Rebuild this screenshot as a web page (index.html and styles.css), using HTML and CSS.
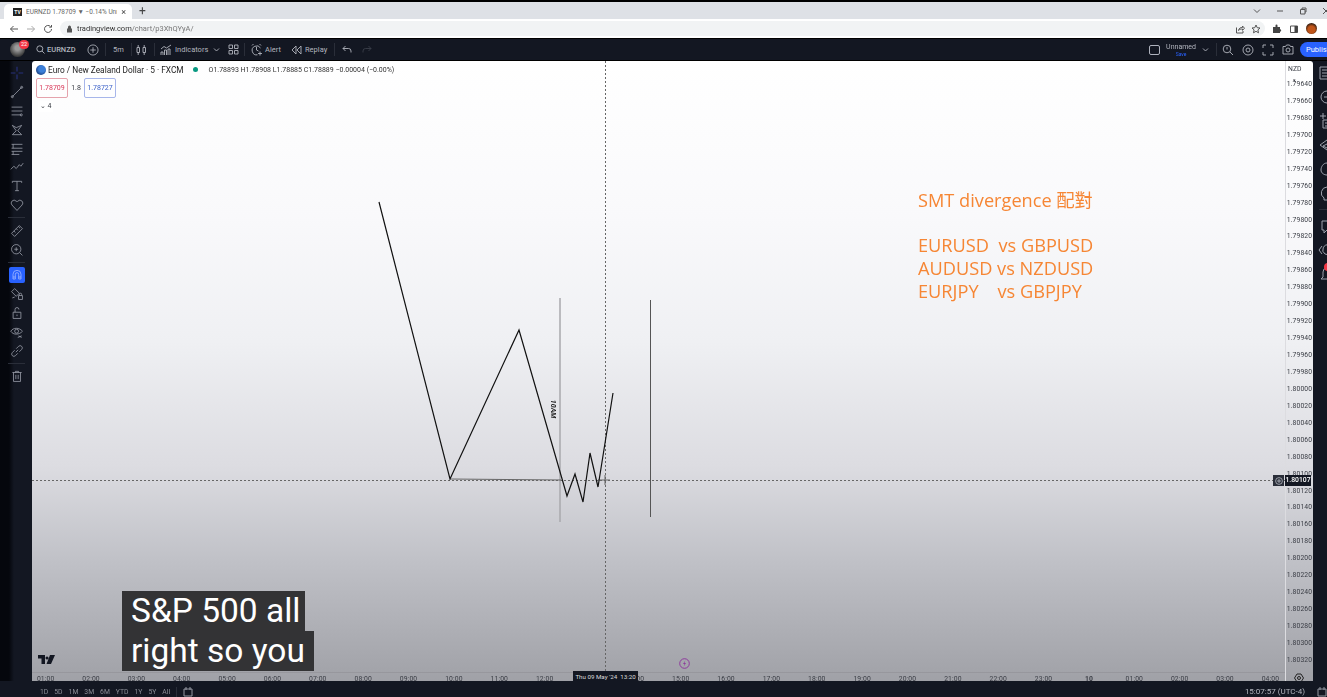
FILE: index.html

```html
<!DOCTYPE html>
<html lang="zh-Hant">
<head>
  <meta charset="UTF-8" />
  <meta name="viewport" content="width=device-width, initial-scale=1.0" />
  <title>EURNZD 1.78709 - TradingView</title>
  <link rel="stylesheet" href="styles.css">
</head>
<body>
  <div class="screen">
    <div class="tabstrip">
      <div class="tab">
        <span class="favicon">TV</span>
        <span class="tab-title">EURNZD 1.78709 ▼ −0.14% Unn</span>
        <span class="tab-close">×</span>
      </div>
      <span class="tab-new">+</span>
      <span class="win-btns">
        <svg width="8" height="8" viewBox="0 0 8 8"><path d="M1 2.500l3 3 3-3" class="ln"/></svg>
        <svg width="8" height="8" viewBox="0 0 8 8"><path d="M1 4h6" class="ln"/></svg>
        <svg width="8" height="8" viewBox="0 0 8 8"><path d="M1.500 2.500h4.500v4.500h-4.500zM3 2.500V1h4v4h-1" class="ln"/></svg>
        <svg width="8" height="8" viewBox="0 0 8 8"><path d="M1 1l6 6M7 1l-6 6" class="ln"/></svg>
      </span>
    </div>

    <div class="addressbar">
      <svg width="10" height="10" viewBox="0 0 10 10"><path d="M9 5H1.500M4.500 2L1.500 5l3 3" class="ln"/></svg>
      <svg class="dim" width="10" height="10" viewBox="0 0 10 10"><path d="M1 5h7.500M5.500 2l3 3-3 3" class="ln"/></svg>
      <svg width="10" height="10" viewBox="0 0 10 10"><path d="M8.500 5a3.500 3.500 0 1 1-1-2.500M8.500 1v2.200H6.300" class="ln"/></svg>
      <div class="omnibox">
        <svg width="7" height="8" viewBox="0 0 7 8"><path d="M1 3.500h5v4H1zM2 3.500V2a1.500 1.500 0 0 1 3 0v1.500" fill="#555"/></svg>
        <span>tradingview.com<span class="url-path">/chart/p3XhQYyA/</span></span>
        <span class="omni-right">
          <svg width="10" height="10" viewBox="0 0 10 10"><path d="M1.500 3.500v5.500h6.500v-2M3.500 6.500c.5-2.500 2-3 4-3V2l2 2.200-2 2.200V5c-1.500 0-3 .3-4 1.500z" class="ln"/></svg>
          <svg width="10" height="10" viewBox="0 0 10 10"><path d="M5 1l1.200 2.700 2.800.3-2.100 1.900.6 2.900L5 7.300 2.500 8.800l.6-2.900L1 4l2.800-.3z" class="ln"/></svg>
        </span>
      </div>
      <svg width="10" height="10" viewBox="0 0 10 10"><path d="M1 3h2.500V1.500a1 1 0 0 1 2 0V3H8v2.200a1.200 1.200 0 0 1 0 2.400V9H1z" fill="#444"/></svg>
      <svg width="10" height="10" viewBox="0 0 10 10"><path d="M1.500 2h7v6.500h-7z" class="ln"/><path d="M5.500 2h3v6.500h-3z" fill="#444"/></svg>
      <span class="profile"></span>
    </div>

    <div class="topbar">
      <span class="slot avatar-slot"><span class="avatar"></span><span class="badge">22</span></span>
      <span class="slot symbol">
        <svg width="9" height="9" viewBox="0 0 9 9"><circle cx="3.800" cy="3.800" r="3" class="tl"/><path d="M6 6l2.500 2.500" class="tl"/></svg>
        EURNZD
      </span>
      <span class="slot plus-slot"><svg width="12" height="12" viewBox="0 0 13 13"><circle cx="6.500" cy="6.500" r="5.500" class="tl"/><path d="M6.500 3.500v6M3.500 6.500h6" class="tl"/></svg></span>
      <span class="sep"></span>
      <span class="slot interval">5m</span>
      <span class="sep"></span>
      <span class="slot candle-slot"><svg width="12" height="12" viewBox="0 0 12 12"><path d="M2 3.500h2.500v5H2zM3.200 1v2.500M3.200 8.500V11M8 3.500h2.500v5H8zM9.200 1v2.500M9.200 8.500V11" class="tl"/></svg></span>
      <span class="sep"></span>
      <span class="slot indicators">
        <svg width="12" height="12" viewBox="0 0 12 12"><path d="M1 5l3-2.500 2.500 1.500L11 1M1 11V8h2v3M4.500 11V6h2v5M8 11V5h2v6" class="tl"/></svg>
        Indicators
      </span>
      <svg class="chev" width="7" height="7" viewBox="0 0 7 7"><path d="M1 2.500l2.500 2.500L6 2.500" class="tl"/></svg>
      <span class="slot layout-slot"><svg width="11" height="11" viewBox="0 0 11 11"><path d="M1 1h3.500v3.500H1zM6.500 1H10v3.500H6.500zM1 6.500h3.500V10H1zM6.500 6.500H10V10H6.500z" class="tl"/></svg></span>
      <span class="sep"></span>
      <span class="slot alert">
        <svg width="12" height="12" viewBox="0 0 12 12"><path d="M9.500 4a4.500 4.500 0 1 0-3 6.800M5.500 3v3l2 1M1 1.500L2.500 0M10 1.500L8.500 0M9 7.500v4M7 9.500h4" class="tl"/></svg>
        Alert
      </span>
      <span class="slot replay">
        <svg width="11" height="10" viewBox="0 0 11 10"><path d="M5 1L1 5l4 4zM10 1L6 5l4 4z" class="tl"/></svg>
        Replay
      </span>
      <span class="sep"></span>
      <span class="slot undo"><svg width="10" height="9" viewBox="0 0 10 9"><path d="M3.500 1L1 3.500 3.500 6M1 3.500h5.500A2.500 2.500 0 0 1 9 6v1.500" class="tl"/></svg></span>
      <span class="slot redo"><svg width="10" height="9" viewBox="0 0 10 9"><path d="M6.500 1L9 3.500 6.500 6M9 3.500H3.500A2.500 2.500 0 0 0 1 6v1.500" class="tl off"/></svg></span>

      <span class="top-right">
        <span class="layout-box"></span>
        <span class="layout-name"><span>Unnamed</span><span class="save">Save</span></span>
        <svg class="chev" width="7" height="7" viewBox="0 0 7 7"><path d="M1 2.500l2.500 2.500L6 2.500" class="tl"/></svg>
        <span class="sep"></span>
        <svg width="12" height="12" viewBox="0 0 12 12"><circle cx="5" cy="5" r="3.800" class="tl"/><path d="M8 8l3 3M5 3v2.500" class="tl"/></svg>
        <svg width="12" height="12" viewBox="0 0 12 12"><circle cx="6" cy="6" r="5" class="tl"/><circle cx="6" cy="6" r="2" class="tl"/></svg>
        <svg width="12" height="12" viewBox="0 0 12 12"><path d="M1 4V1h3M8 1h3v3M11 8v3H8M4 11H1V8" class="tl"/></svg>
        <svg width="12" height="11" viewBox="0 0 12 11"><path d="M1 2.500h2.500L4.500 1h3l1 1.500H11V10H1z" class="tl"/><circle cx="6" cy="6" r="2" class="tl"/></svg>
        <span class="publish">Publish</span>
      </span>
    </div>

    <div class="workspace">
      <div class="lefttools">
        <span class="tool"><svg class="ic active-cross" viewBox="0 0 18 18"><path d="M9 1v6M9 11v6M1 9h6M11 9h6"/></svg></span>
        <span class="tool"><svg class="ic" viewBox="0 0 18 18"><path d="M3 15L15 3"/><circle cx="15" cy="3" r="1.300"/><circle cx="3" cy="15" r="1.300"/></svg></span>
        <span class="tool"><svg class="ic" viewBox="0 0 18 18"><path d="M2 4h14M2 9h14M2 14h12"/><circle cx="14.500" cy="14" r="1.300"/></svg></span>
        <span class="tool"><svg class="ic" viewBox="0 0 18 18"><path d="M3 3l5 7-5 5M15 3l-5 7 5 5M3 3l5 3 7-3M3 15h12"/></svg></span>
        <span class="tool"><svg class="ic" viewBox="0 0 18 18"><path d="M2 3h14M4 3v5M2 8h14M2 12h14M4 12v4M2 16h10"/></svg></span>
        <span class="tool"><svg class="ic" viewBox="0 0 18 18"><path d="M1 12l4-4 3 3 4-5 2 2 3-4"/></svg></span>
        <span class="tool"><svg class="ic" viewBox="0 0 18 18"><path d="M3 5V3h12v2M9 3v12M6.500 15h5"/></svg></span>
        <span class="tool"><svg class="ic" viewBox="0 0 18 18"><path d="M9 16L2.500 9a3.800 3.800 0 0 1 0-5 3.900 3.900 0 0 1 5.500 0L9 5l1-1a3.900 3.900 0 0 1 5.500 0 3.800 3.800 0 0 1 0 5z"/></svg></span>
        <span class="divider"></span>
        <span class="tool"><svg class="ic" viewBox="0 0 18 18"><path d="M2 12L12 2l4 4L6 16zM5 9l2 2M8 6l2 2M11 3.500l2 2"/></svg></span>
        <span class="tool"><svg class="ic" viewBox="0 0 18 18"><circle cx="8" cy="8" r="6"/><path d="M12.500 12.500L16 16M8 5.500v5M5.500 8h5"/></svg></span>
        <span class="divider"></span>
        <span class="tool"><span class="magnet"><svg class="ic" viewBox="0 0 18 18"><path d="M3 15V8a6 6 0 0 1 12 0v7h-3.500V8a2.500 2.500 0 0 0-5 0v7zM3 12h3.500M11.500 12H15"/></svg></span></span>
        <span class="tool"><svg class="ic" viewBox="0 0 18 18"><path d="M2 6l4-4 6 6-4 4zM3 14l3-1M11 11h5v5h-5zM12 11V9.500a1.500 1.500 0 0 1 3 0V11"/></svg></span>
        <span class="tool"><svg class="ic" viewBox="0 0 18 18"><path d="M4 8h10v8H4zM6.500 8V4.500a2.500 2.500 0 0 1 5 0M9 11v2"/></svg></span>
        <span class="tool"><svg class="ic" viewBox="0 0 18 18"><path d="M1 8c3-5 11-5 15 0-4 5-12 5-15 0zM10 16l5-2M11 14l4 2"/><circle cx="8.500" cy="8" r="2.500"/></svg></span>
        <span class="tool"><svg class="ic" viewBox="0 0 18 18"><path d="M7.500 10.500l3-3M6 8l-3 3a2.800 2.800 0 0 0 4 4l3-3M12 10l3-3a2.800 2.800 0 0 0-4-4L8 6"/></svg></span>
        <span class="divider"></span>
        <span class="tool"><svg class="ic" viewBox="0 0 18 18"><path d="M3 4.500h12M7 4.500V3h4v1.500M4.500 4.500V16h9V4.500M7.500 7.500V13M10.500 7.500V13"/></svg></span>
      </div>

      <div class="chart">
        <div class="pane">
          <div class="legend">
            <div class="legend-row">
              <span class="flag"></span>
              <span class="legend-title">Euro / New Zealand Dollar · 5 · FXCM</span>
              <span class="live-dot"></span>
              <span class="ohlc">O1.78893 H1.78908 L1.78885 C1.78889 −0.00004 (−0.00%)</span>
            </div>
            <div class="trade-row">
              <span class="trade sell">1.78709</span>
              <span class="spread">1.8</span>
              <span class="trade buy">1.78727</span>
            </div>
            <span class="collapse">⌄ 4</span>
          </div>

          <svg class="drawing" viewBox="0 0 1253 611">
            <path d="M573.500 0V611" class="cross-line"/>
            <path d="M0 419.500H1253" class="cross-line"/>
            <path d="M528 237V461" class="grey-bar"/>
            <path d="M618.500 239V456" class="thin-bar"/>
            <path d="M418 418L529 419" class="flat"/>
            <path d="M566 419H578M573 414V424" class="flat"/>
            <path d="M347 141L418 418L487 269L535 435L543 413L551 441L558 392L566 426L581 332" class="wave"/>
          </svg>
          <span class="tag-10am">10AM</span>

          <div class="note">
            <p>SMT divergence 配對</p>
            <p class="note-gap">EURUSD&nbsp; vs GBPUSD</p>
            <p>AUDUSD vs NZDUSD</p>
            <p>EURJPY &nbsp;&nbsp; vs GBPJPY</p>
          </div>

          <span class="tv-logo">
            <svg width="17" height="9" viewBox="0 0 17 9"><path d="M0 0h7v9H3.500V3.500H0zM7.500 3a1.500 1.500 0 1 0 0-.1zM12 0h5l-4 9H8.500z" fill="#131722"/></svg>
          </span>
          <span class="bolt"><svg width="11" height="11" viewBox="0 0 11 11"><circle cx="5.500" cy="5.500" r="4.800" fill="none" stroke="#8e3a9d"/><path d="M6.300 2.500L4 6h1.500l-.8 2.500L7 5H5.500z" fill="#8e3a9d"/></svg></span>
        </div>

        <div class="price-axis" id="prices">
          <span class="currency">NZD <i>▾</i></span>
        </div>

        <div class="time-axis" id="times"></div>
        <div class="axis-corner"><svg width="10" height="10" viewBox="0 0 10 10"><path d="M3 1h4l2.500 4L7 9H3L.5 5z" fill="none" stroke="#222"/><circle cx="5" cy="5" r="1.500" fill="none" stroke="#222"/></svg></div>

        <div class="price-tag">
          <span class="tag-plus"><svg width="8" height="8" viewBox="0 0 8 8"><circle cx="4" cy="4" r="3.400" fill="none" stroke="#c9ccd4" stroke-width="0.7"/><path d="M4 2v4M2 4h4" stroke="#c9ccd4" stroke-width="0.7"/></svg></span>
          <span class="tag-value">1.80107</span>
        </div>
        <span class="date-tag">Thu 09 May '24 &nbsp;13:20</span>
      </div>

      <div class="righttools">
        <svg class="ric" viewBox="0 0 14 14"><path d="M1 1h12v12H1zM3 4h8M3 7h8M3 10h8"/></svg>
        <svg class="ric" viewBox="0 0 14 14"><circle cx="8" cy="7" r="6"/><path d="M8 7H5"/></svg>
        <svg class="ric" viewBox="0 0 14 14"><path d="M1 2h6M4-1v6M4 6h9v8H4zM6 9h7M6 12h7"/></svg>
        <svg class="ric" viewBox="0 0 14 14"><path d="M8 2L1 7l7 5M8 6L4 8l4 2"/></svg>
        <svg class="ric" viewBox="0 0 14 14"><path d="M8 1C4 1 2 5 2 8s3 5 6 5"/></svg>
        <svg class="ric" viewBox="0 0 14 14"><path d="M8 1a6 6 0 0 0-3 11v2h5"/></svg>
        <span class="rdiv"></span>
        <svg class="ric" viewBox="0 0 14 14"><path d="M14 2H3v9h2v3l3-3h6"/></svg>
        <svg class="ric" viewBox="0 0 14 14"><path d="M3 3L0 7l3 4M10 2a5 5 0 0 0-4 9l4 1"/></svg>
        <svg class="ric" viewBox="0 0 14 14"><path d="M8 1a4 4 0 0 0-4 4v5l-2 2h12"/><circle cx="9" cy="0" r="4" fill="#f23645" stroke="none"/></svg>
      </div>
    </div>

    <div class="bottombar">
      <span class="ranges">
        <span>1D</span><span>5D</span><span>1M</span><span>3M</span><span>6M</span><span>YTD</span><span>1Y</span><span>5Y</span><span>All</span>
      </span>
      <span class="sep"></span>
      <svg width="10" height="10" viewBox="0 0 10 10"><path d="M1 2h8v7H1zM3 0v3M7 0v3" fill="none" stroke="#9598a1"/></svg>
      <span class="clock">15:07:57 (UTC-4)</span>
      <svg width="10" height="10" viewBox="0 0 10 10"><path d="M1 2h8v7H1zM3 0v3M7 0v3" fill="none" stroke="#9598a1"/></svg>
    </div>

    <div class="captions">
      <span class="cap-line">S&amp;P 500 all</span>
      <span class="cap-line cap-wide">right so you</span>
    </div>
  </div>

  <script>
    const prices = document.getElementById('prices');
    for (let i = 0; i < 35; i++) {
      const label = document.createElement('span');
      label.textContent = (1.7964 + i * 0.0002).toFixed(5);
      prices.appendChild(label);
    }

    // 13:00 sits under the crosshair date tag, so it is left empty
    const times = document.getElementById('times');
    const labels = ['01:00','02:00','03:00','04:00','05:00','06:00','07:00','08:00','09:00','10:00','11:00','12:00','','14:00','15:00','16:00','17:00','18:00','19:00','20:00','21:00','22:00','23:00','10','01:00','02:00','03:00','04:00'];
    labels.forEach((t) => {
      const label = document.createElement('span');
      label.textContent = t;
      if (t === '10') label.classList.add('day');
      times.appendChild(label);
    });
  </script>
</body>
</html>
```

FILE: styles.css

```css
* {
  box-sizing: border-box;
}
html, body {
  margin: 0;
  height: 100%;
  overflow: hidden;
  background-color: #000;
}
.screen {
  position: relative;
  display: flex;
  flex-direction: column;
  width: 1327px;
  height: 697px;
  padding-top: 2px;
  font-family: 'Roboto', 'Liberation Sans', sans-serif;
  overflow: hidden;
}
/* the source is a video frame, everything but the captions is a bit soft */
.tabstrip, .addressbar, .topbar, .workspace, .bottombar {
  filter: blur(0.4px);
}
.ln {
  fill: none;
  stroke: #555;
  stroke-width: 1;
}
.tl {
  fill: none;
  stroke: #b2b5be;
  stroke-width: 0.9;
}
.tl.off {
  stroke: #3a3e4a;
}

/* browser chrome */
.tabstrip {
  display: flex;
  align-items: flex-end;
  flex: 0 0 17px;
  padding-left: 4px;
  background-color: #dee1e6;
}
.tab {
  display: flex;
  align-items: center;
  gap: 4px;
  width: 128px;
  height: 15px;
  padding: 0 6px 0 9px;
  border-radius: 5px 5px 0 0;
  background-color: #fff;
}
.favicon {
  flex: none;
  width: 9px;
  height: 8px;
  background-color: #222;
  color: #fff;
  font-size: 5px;
  font-weight: 700;
  line-height: 8px;
  text-align: center;
}
.tab-title {
  flex: 1;
  overflow: hidden;
  white-space: nowrap;
  color: #666;
  font-size: 6.500px;
}
.tab-close {
  color: #444;
  font-size: 9px;
}
.tab-new {
  align-self: center;
  margin-left: 7px;
  color: #444;
  font-size: 12px;
}
.win-btns {
  display: flex;
  gap: 15px;
  align-self: center;
  margin-left: auto;
  margin-right: -3px;
}
.addressbar {
  display: flex;
  align-items: center;
  gap: 7px;
  flex: 0 0 19px;
  padding: 0 10px 0 9px;
  background-color: #fff;
}
.addressbar .dim {
  opacity: 0.5;
}
.omnibox {
  display: flex;
  align-items: center;
  gap: 4px;
  width: 1205px;
  height: 15px;
  padding: 0 2px 0 6px;
  border-radius: 8px;
  background-color: #f1f3f4;
  color: #333;
  font-size: 7.500px;
}
.url-path {
  color: #777;
}
.omni-right {
  display: flex;
  gap: 6px;
  margin-left: auto;
  margin-right: 2px;
}
.profile {
  width: 11px;
  height: 11px;
  border-radius: 50%;
  background: radial-gradient(circle at 50% 60%, #c0551a 40%, #2a1a10 75%);
}

/* tradingview top bar */
.topbar {
  display: flex;
  align-items: center;
  flex: 0 0 21px;
  margin-top: 1px;
  background-color: #131722;
  color: #b2b5be;
  font-size: 7.500px;
  white-space: nowrap;
}
.slot {
  display: flex;
  align-items: center;
  justify-content: center;
  gap: 3px;
}
.sep {
  flex: none;
  width: 1px;
  height: 13px;
  background-color: #2a2e39;
}
.avatar-slot {
  position: relative;
  width: 34px;
}
.avatar {
  width: 15px;
  height: 15px;
  border-radius: 50%;
  background: radial-gradient(circle at 50% 40%, #9a9a9a 20%, #3b3b3b 70%);
}
.badge {
  position: absolute;
  top: -2px;
  left: 19px;
  width: 10px;
  height: 9px;
  border-radius: 5px;
  background-color: #f23645;
  color: #fff;
  font-size: 5.500px;
  line-height: 9px;
  text-align: center;
}
.symbol {
  justify-content: flex-start;
  gap: 2px;
  width: 46px;
  padding-left: 2px;
  font-weight: 500;
}
.plus-slot {
  width: 25px;
}
.interval {
  width: 25px;
}
.candle-slot {
  width: 22px;
  padding-right: 5px;
}
.indicators {
  width: 56px;
  justify-content: flex-start;
  padding-left: 5px;
}
.chev {
  flex: none;
  margin: 0 4px 0 2px;
}
.layout-slot {
  width: 19px;
  margin-right: 1px;
}
.alert {
  width: 43px;
  justify-content: flex-start;
  padding-left: 6px;
  gap: 2px;
}
.replay {
  width: 46px;
  justify-content: flex-start;
  padding-left: 3px;
}
.undo {
  width: 24px;
}
.redo {
  width: 16px;
}
.top-right {
  display: flex;
  align-items: center;
  gap: 8px;
  margin-left: auto;
  margin-right: -13px;
}
.top-right .sep {
  margin: 0 -3px 0 -1px;
}
.layout-box {
  width: 11px;
  height: 10px;
  margin-right: -2px;
  border: 1px solid #aeb2bd;
  border-radius: 2px;
}
.layout-name {
  display: flex;
  flex-direction: column;
  align-items: center;
  font-size: 7px;
  line-height: 8px;
}
.save {
  color: #2962ff;
  font-size: 5px;
  line-height: 6px;
}
.top-right .chev {
  margin: 0 0 0 -2px;
}
.publish {
  width: 40px;
  height: 15px;
  margin-left: -2px;
  padding-left: 6px;
  border-radius: 8px;
  background-color: #2962ff;
  color: #fff;
  line-height: 15px;
}

/* workspace */
.workspace {
  display: flex;
  flex: 1;
  min-height: 0;
  margin-top: 1px;
  background-color: #131722;
}
.lefttools {
  display: flex;
  flex-direction: column;
  flex: 0 0 32px;
  padding-top: 3px;
  background: linear-gradient(90deg, #05070d 0, #05070d 9px, #131722 14px);
}
.tool {
  display: flex;
  align-items: center;
  justify-content: center;
  flex: 0 0 18.800px;
  padding-left: 1px;
}
.divider {
  flex: none;
  width: 17px;
  height: 1px;
  margin: 3px 0 3px 8px;
  background-color: #2a2e39;
}
.ic {
  width: 14px;
  height: 14px;
  fill: none;
  stroke: #9da1ac;
  stroke-width: 1;
}
.active-cross {
  stroke: #27307a;
  stroke-width: 1.500;
}
.magnet {
  display: flex;
  align-items: center;
  justify-content: center;
  width: 16px;
  height: 16px;
  border-radius: 2px;
  background-color: #2962ff;
}
.magnet .ic {
  width: 12px;
  height: 12px;
  stroke: #b8c8ff;
}

.chart {
  position: relative;
  display: grid;
  flex: 1;
  grid-template-columns: minmax(0, 1fr) 28px;
  grid-template-rows: minmax(0, 1fr) 13px;
  min-width: 0;
  height: 624px;
  border-radius: 3px;
  background: linear-gradient(180deg, #fff 0, #f9f9fb 25%, #eff0f3 45%, #dcdce1 65%, #c0c1c7 80%, #9fa0a6 100%);
  color: #3a3d45;
}
.pane {
  position: relative;
  overflow: hidden;
}
.legend {
  display: flex;
  flex-direction: column;
  align-items: flex-start;
  padding: 3px 0 0 4px;
}
.legend-row {
  display: flex;
  align-items: center;
  height: 11px;
  white-space: nowrap;
}
.flag {
  position: relative;
  width: 10px;
  height: 10px;
  margin-right: 2px;
  border-radius: 50%;
  background: radial-gradient(circle at 60% 40%, #3c7fd8 35%, #173a78 80%);
}
.legend-title {
  color: #222;
  font-size: 8.300px;
}
.live-dot {
  width: 5px;
  height: 5px;
  margin: 0 11px 0 9px;
  border-radius: 50%;
  background-color: #089981;
}
.ohlc {
  color: #333;
  font-size: 7px;
}
.trade-row {
  display: flex;
  align-items: center;
  margin-top: 3px;
}
.trade {
  width: 32px;
  height: 20px;
  border: 1px solid;
  border-radius: 2px;
  font-size: 7px;
  line-height: 18px;
  text-align: center;
}
.sell {
  border-color: #e5a3ad;
  color: #d9395a;
}
.buy {
  border-color: #a7b6ea;
  color: #3c62c9;
}
.spread {
  width: 16px;
  font-size: 7px;
  text-align: center;
}
.collapse {
  width: 15px;
  height: 11px;
  margin: 3px 0 0 2px;
  background-color: #fff;
  font-size: 7px;
  line-height: 11px;
  text-align: center;
}
.drawing {
  position: absolute;
  top: 0;
  left: 0;
  width: 1253px;
  height: 611px;
  fill: none;
}
.cross-line {
  stroke: #666;
  stroke-width: 1;
  stroke-dasharray: 2 2;
}
.grey-bar {
  stroke: #a9a9ad;
  stroke-width: 1.500;
}
.thin-bar {
  stroke: #555;
  stroke-width: 1;
}
.flat {
  stroke: #666;
  stroke-width: 1;
}
.wave {
  stroke: #111;
  stroke-width: 1.200;
}
.tag-10am {
  position: absolute;
  top: 344px;
  left: 512px;
  color: #222;
  font-size: 7px;
  font-style: italic;
  font-weight: 700;
  transform: rotate(90deg);
}
.note {
  position: absolute;
  top: 128px;
  left: 886px;
  color: #f68634;
  font-family: 'Open Sans', 'Noto Sans CJK TC', sans-serif;
  font-size: 18.200px;
  line-height: 23px;
  white-space: nowrap;
}
.note p {
  margin: 0;
}
.note .note-gap {
  margin-top: 22px;
}
.tv-logo {
  position: absolute;
  top: 594px;
  left: 6px;
  line-height: 0;
}
.bolt {
  position: absolute;
  top: 597px;
  left: 647px;
  line-height: 0;
}
.price-axis {
  display: flex;
  flex-direction: column;
  grid-row: 1 / 3;
  grid-column: 2;
  padding-top: 15px;
  border-left: 1px solid #dcdce0;
  font-size: 6.800px;
  line-height: 16.940px;
  text-align: center;
  letter-spacing: 0.1px;
}
.currency {
  position: absolute;
  top: 3px;
  right: 2px;
  width: 25px;
  height: 11px;
  padding-left: 2px;
  background-color: #fff;
  line-height: 11px;
  text-align: left;
}
.currency i {
  margin-left: 5px;
  font-style: normal;
  font-size: 5px;
}
.time-axis {
  position: relative;
  grid-row: 2;
  grid-column: 1;
  display: flex;
  border-top: 1px solid #97979d;
  font-size: 6.800px;
  line-height: 12px;
}
.time-axis span {
  flex: 0 0 45.360px;
  text-align: center;
  letter-spacing: 0.1px;
}
.time-axis span:first-child {
  margin-left: -9px;
}
.time-axis .day {
  font-weight: 700;
}
.axis-corner {
  position: absolute;
  right: 9px;
  bottom: 2px;
  line-height: 0;
}
.price-tag {
  position: absolute;
  top: 414px;
  right: 2px;
  display: flex;
  height: 11px;
  color: #fff;
  font-size: 6.800px;
  line-height: 11px;
}
.tag-plus {
  display: flex;
  align-items: center;
  justify-content: center;
  width: 11px;
  margin-right: 1px;
  background-color: #2a2e39;
}
.tag-value {
  width: 26px;
  background-color: #131722;
  font-weight: 500;
  text-align: center;
}
.date-tag {
  position: absolute;
  bottom: 2px;
  left: 541px;
  width: 65px;
  height: 12px;
  background-color: #131722;
  color: #ddd;
  font-size: 6.200px;
  line-height: 12px;
  text-align: center;
  white-space: nowrap;
}
.righttools {
  display: flex;
  flex-direction: column;
  flex: 0 0 14px;
  gap: 10px;
  padding: 5px 0 0 6px;
  overflow: hidden;
  background-color: #131722;
}
.ric {
  flex: none;
  width: 14px;
  height: 14px;
  fill: none;
  stroke: #9da1ac;
  stroke-width: 1;
  overflow: visible;
}
.rdiv {
  flex: none;
  height: 1px;
  margin: -1px 0 -1px 0;
  background-color: #2a2e39;
}

/* bottom bar */
.bottombar {
  display: flex;
  align-items: flex-start;
  gap: 6px;
  flex: 0 0 11px;
  padding: 6px 0 0 40px;
  background-color: #131722;
  color: #8b8e97;
  font-size: 6.800px;
  line-height: 10px;
}
.ranges {
  display: flex;
  gap: 6px;
}
.bottombar .sep {
  height: 10px;
}
.clock {
  margin-left: auto;
  margin-right: 6px;
  color: #b2b5be;
  font-size: 8px;
}

/* video captions */
.captions {
  position: absolute;
  top: 591px;
  left: 122px;
  display: flex;
  flex-direction: column;
  align-items: flex-start;
}
.cap-line {
  height: 40px;
  padding: 0 5px 0 9px;
  background-color: #333335;
  color: #fff;
  font-family: 'Roboto', sans-serif;
  font-size: 33.500px;
  line-height: 40px;
  white-space: nowrap;
}
.cap-wide {
  padding-right: 9px;
}
```
